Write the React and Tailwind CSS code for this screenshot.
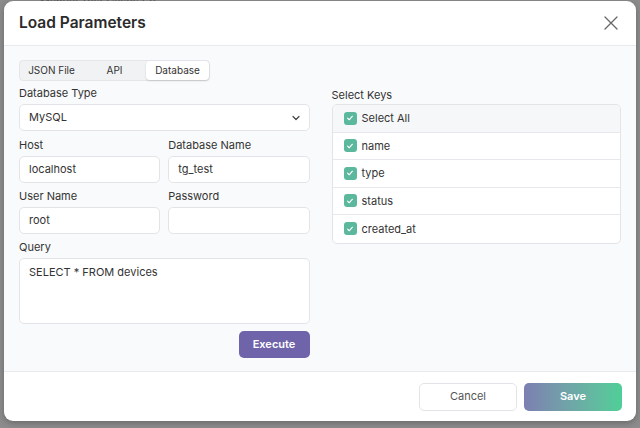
import React from "react";

const font = { fontFamily: "Inter, 'Noto Sans', sans-serif" };

function Check() {
  return (
    <span className="flex h-[13px] w-[13px] items-center justify-center rounded-[3px] bg-[#5cb89d]">
      <svg width="8" height="8" viewBox="0 0 10 10" fill="none">
        <path d="M2 5.2l2 2 4-4.4" stroke="white" strokeWidth="1.4" strokeLinecap="round" strokeLinejoin="round" />
      </svg>
    </span>
  );
}

function Field({ label, value, className = "" }) {
  return (
    <div className={"flex flex-col " + className}>
      <div className="text-[11px] leading-[14px] text-[#333] mb-[4px]">{label}</div>
      <div className="h-[27px] rounded-[5px] border border-[#e2e4e8] bg-white px-[9px] flex items-center text-[11px] text-[#333]">
        {value}
      </div>
    </div>
  );
}

export default function App() {
  const keys = ["Select All", "name", "type", "status", "created_at"];
  return (
    <div className="h-[428px] w-[640px] overflow-hidden bg-[#8c8c8c] relative" style={font}>
      <div className="absolute left-[40px] top-[-6px] text-[11px] text-[#555]">Manual Test Cases (3)</div>
      <div className="absolute left-[4px] top-[1px] w-[632px] h-[420px] rounded-[9px] bg-white flex flex-col overflow-hidden shadow-[0_2px_6px_rgba(0,0,0,0.25)]">
        <div className="h-[45px] flex items-center justify-between pl-[15px] pr-[18px] border-b border-[#e8eaed]">
          <div className="text-[15.5px] font-semibold text-[#2b2b2b]">Load Parameters</div>
          <svg width="14" height="14" viewBox="0 0 14 14" fill="none">
            <path d="M1 1l12 12M13 1L1 13" stroke="#666" strokeWidth="1.3" strokeLinecap="round" />
          </svg>
        </div>
        <div className="h-[326px] bg-[#f9fafb] border-b border-[#e8eaed] px-[15px] pt-[14px] flex gap-[22px]">
          <div className="w-[291px] flex flex-col">
            <div className="flex h-[21px] w-[191px] rounded-[4px] border border-[#e4e6ea] bg-[#f1f2f4] text-[10px] text-[#333]">
              <div className="w-[63px] flex items-center justify-center">JSON File</div>
              <div className="w-[63px] flex items-center justify-center">API</div>
              <div className="flex-1 flex items-center justify-center rounded-[4px] bg-white shadow-[0_1px_2px_rgba(0,0,0,0.15)]">Database</div>
            </div>
            <div className="text-[11px] leading-[14px] text-[#333] mt-[5px] mb-[4px]">Database Type</div>
            <div className="h-[27px] rounded-[5px] border border-[#e2e4e8] bg-white pl-[9px] pr-[8px] flex items-center justify-between text-[11px] text-[#333]">
              <span>MySQL</span>
              <svg width="10" height="10" viewBox="0 0 10 10" fill="none">
                <path d="M2 3.5l3 3 3-3" stroke="#444" strokeWidth="1.2" strokeLinecap="round" strokeLinejoin="round" />
              </svg>
            </div>
            <div className="grid grid-cols-2 gap-x-[8px] gap-y-[6px] mt-[7px]">
              <Field label="Host" value="localhost" />
              <Field label="Database Name" value="tg_test" />
              <Field label="User Name" value="root" />
              <Field label="Password" value="" />
            </div>
            <div className="text-[11px] leading-[14px] text-[#333] mt-[6px] mb-[4px]">Query</div>
            <div className="h-[66px] rounded-[5px] border border-[#e2e4e8] bg-white px-[9px] pt-[5px] text-[11px] text-[#333]">
              SELECT * FROM devices
            </div>
            <div className="flex justify-end mt-[7px]">
              <div className="w-[71px] h-[27px] rounded-[5px] bg-[#6f64a9] text-white text-[11px] font-semibold flex items-center justify-center">
                Execute
              </div>
            </div>
          </div>
          <div className="w-[290px] flex flex-col pt-[28px]">
            <div className="text-[11px] leading-[14px] text-[#333] mb-[2px]">Select Keys</div>
            <div className="rounded-[5px] border border-[#e2e4e8] bg-white">
              {keys.map((k, i) => (
                <div
                  key={k}
                  className={
                    "h-[27.5px] flex items-center gap-[5px] pl-[11px] text-[11px] text-[#333] " +
                    (i === 0 ? "bg-[#f6f7f8] rounded-t-[5px] " : "") +
                    (i < keys.length - 1 ? "border-b border-[#e6e8eb]" : "")
                  }
                >
                  <Check />
                  <span>{k}</span>
                </div>
              ))}
            </div>
          </div>
        </div>
        <div className="flex-1 flex items-center justify-end gap-[7px] pr-[14px]">
          <div className="w-[98px] h-[28px] rounded-[5px] border border-[#e2e4e8] bg-white text-[11px] text-[#555] flex items-center justify-center">
            Cancel
          </div>
          <div className="w-[98px] h-[28px] rounded-[5px] bg-gradient-to-r from-[#7c7fb1] to-[#4ecf97] text-white text-[11px] font-semibold flex items-center justify-center">
            Save
          </div>
        </div>
      </div>
    </div>
  );
}
